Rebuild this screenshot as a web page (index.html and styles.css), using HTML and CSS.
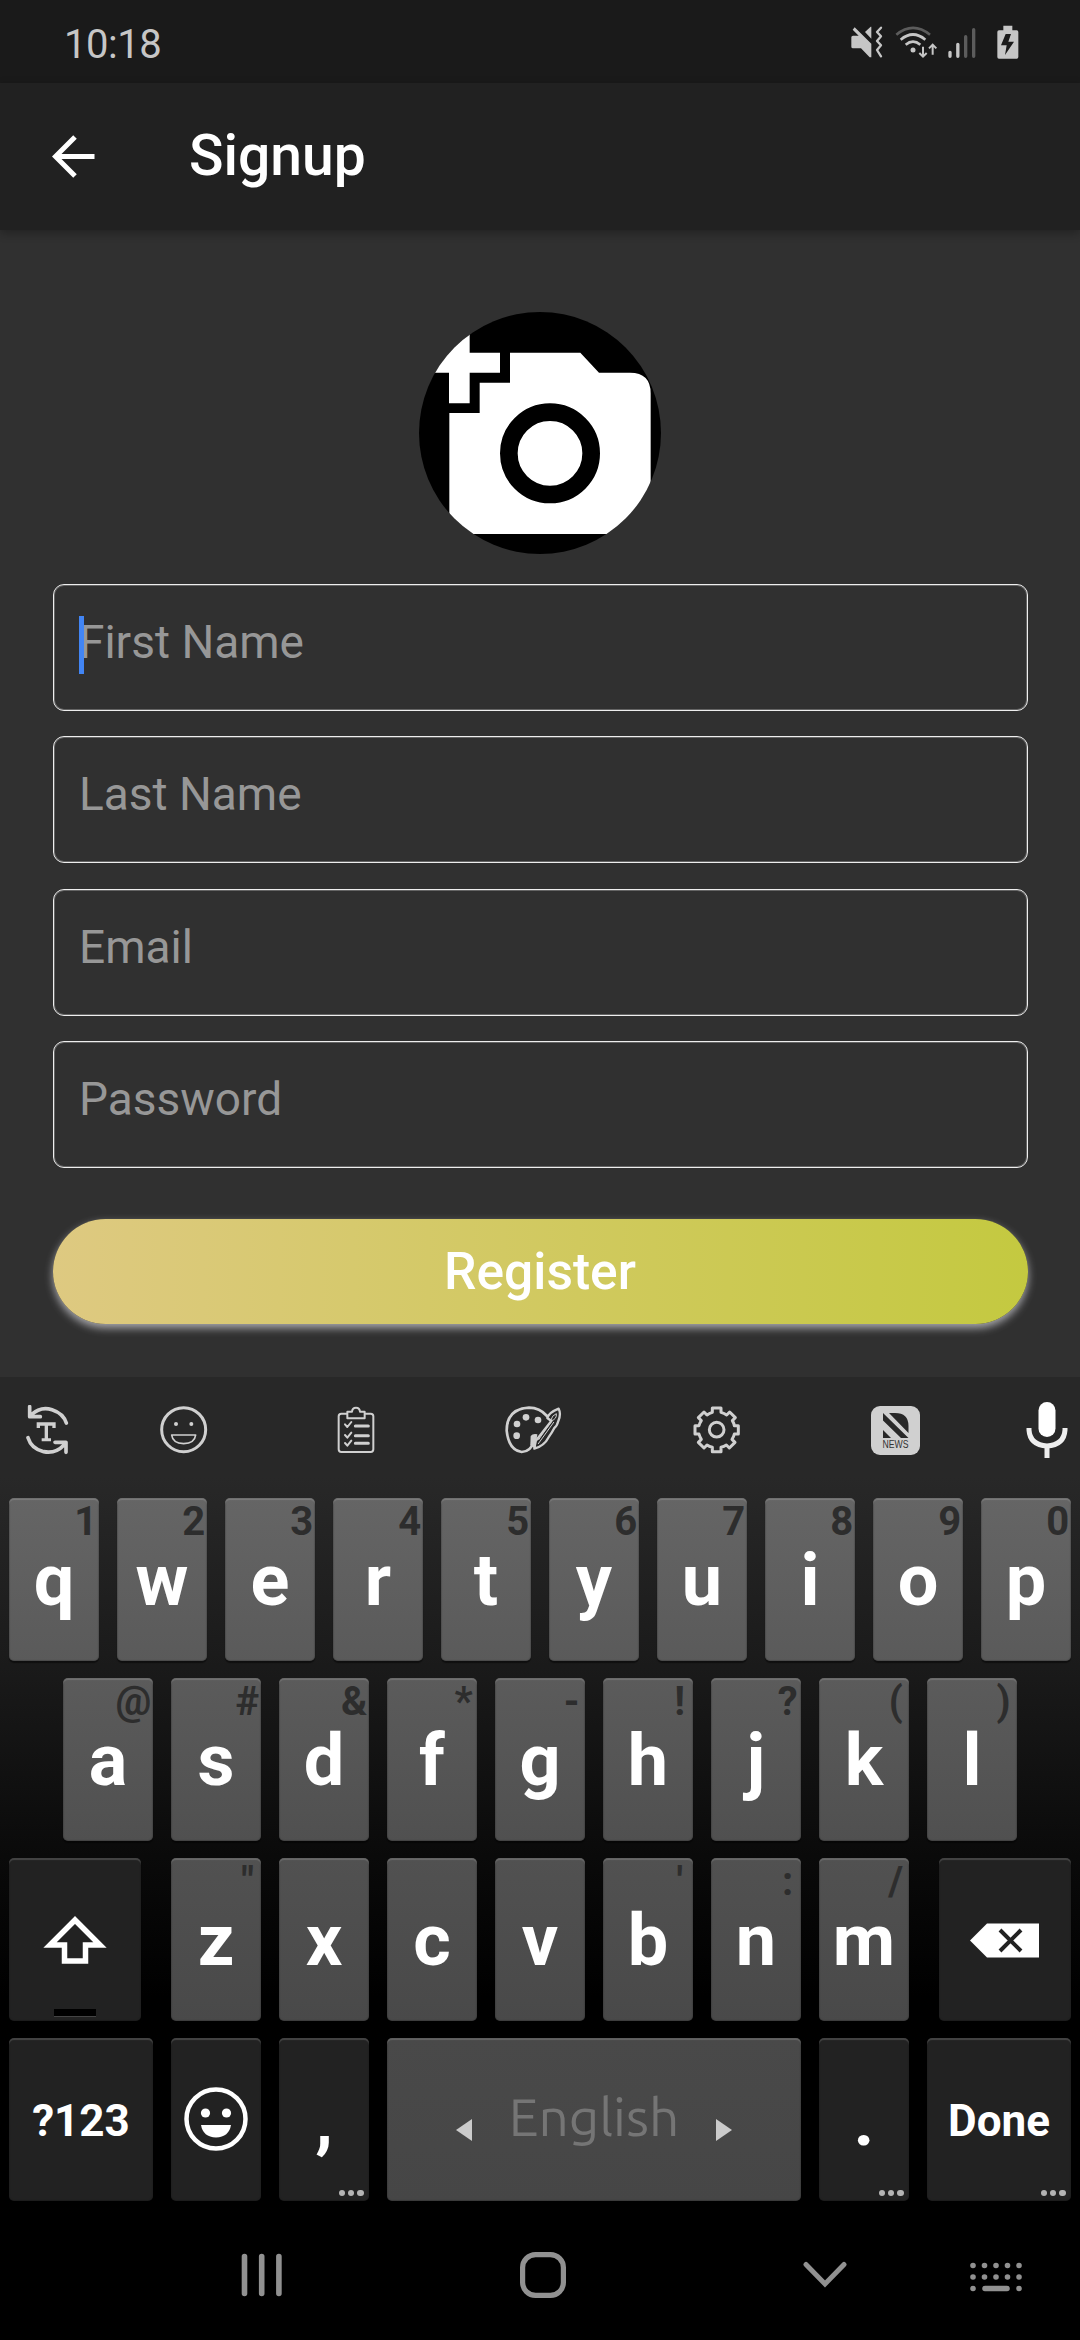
FILE: index.html
```html
<!DOCTYPE html>
<html lang="en">
<head>
<meta charset="utf-8">
<title>Signup</title>
<link rel="stylesheet" href="styles.css">
</head>
<body>
<div class="screen">
  <header class="status">
    <span class="clock">10:18</span>
    <div class="status-icons">
      <svg class="st-mute" width="33" height="36" viewBox="149 76 99 108"><path fill="#c6c6c6" d="M155 108h17l-18-18 6-7 50 49v41h-5l-26-27h-24q-5 0-5-5v-28q0-5 5-5zM191 97l17-16h2v36z"/><path fill="none" stroke="#c6c6c6" stroke-width="7" stroke-linejoin="round" stroke-linecap="round" d="M239 84l-12 13 12 13-12 14 12 13-12 14 12 19"/></svg>
      <svg class="st-wifi" width="43" height="36" viewBox="280 76 129 108"><g fill="none" stroke="#c6c6c6" stroke-width="8"><path stroke="#5c5c5c" d="M284 105q50-41 101 0"/><path d="M297 120q37-31 74 0M312 135q22-18 44 0"/></g><circle cx="334" cy="151" r="7.500" fill="#c6c6c6"/><path fill="none" stroke="#c6c6c6" stroke-width="6" d="M364 141v28M353 160l11 11 11-11M393 165v-28M382 146l11-11 11 11"/></svg>
      <svg class="st-signal" width="28" height="36" viewBox="440 76 84 108"><g stroke-width="10" stroke-linecap="round" stroke="#c6c6c6"><path d="M446 158v12M469.500 134v36"/><path stroke="#5c5c5c" d="M493 111v59M517 90v80"/></g></svg>
      <svg class="st-battery" width="22" height="36" viewBox="587 76 66 108"><path fill="#c6c6c6" d="M606 78h27v14h13q5 0 5 5v75q0 5-5 5h-53q-5 0-5-5V97q0-5 5-5h13z"/><path fill="#1a1a1a" d="M613 103h16l-8 23h17l-27 40 5-29h-17z"/></svg>
    </div>
  </header>
  <div class="appbar">
    <svg class="back" width="43" height="43" viewBox="0 0 43 43"><path fill="none" stroke="#fff" stroke-width="5" d="M42.500 21.500H4M23 2L3.500 21.500 23 41"/></svg>
    <h1 class="title">Signup</h1>
  </div>
  <main class="form">
    <svg class="avatar" width="242" height="242" viewBox="57 66 726 726">
      <defs><clipPath id="round"><circle cx="420" cy="429" r="363"/></clipPath></defs>
      <g clip-path="url(#round)"><path d="M57 66h726v726H57z"/><path fill="#fff" d="M57 188h90V66h62v122h91v60h-91v92h-62v-92H57zM330 188h211l56 60h93q62 0 62 62v422H148V369h91v-91h91z"/><circle cx="450" cy="490" r="123.500" fill="none" stroke="#000" stroke-width="53"/></g>
    </svg>
    <div class="fields">
      <div class="field"><span class="caret"></span>First Name</div>
      <div class="field">Last Name</div>
      <div class="field">Email</div>
      <div class="field">Password</div>
    </div>
    <div class="register">Register</div>
  </main>
  <section class="keyboard">
    <div class="toolbar">
      <svg class="tb-translate" width="43" height="50" viewBox="48 42 129 150"><g fill="none" stroke="#d0d0d0" stroke-width="11" stroke-linecap="round" stroke-linejoin="round"><path d="M59 47v30h32M64 71q28-26 62-15 34 11 43 40M168 184v-30h-33M162 162q-25 27-61 20-37-9-47-42"/></g><path fill="#d0d0d0" d="M80 94h57v17h-10v-7h-13v38h9v9H95v-9h9v-38H90v7H80z"/></svg>
      <svg class="tb-emoji" width="48" height="48" viewBox="450 50 144 144"><g fill="none" stroke="#d0d0d0"><circle cx="521" cy="121" r="66" stroke-width="9"/><path stroke-width="5" stroke-linejoin="round" d="M485 137h72q-3 25-36 26-33-1-36-26z"/></g><g fill="#d0d0d0"><circle cx="498" cy="104" r="6"/><circle cx="544" cy="104" r="6"/></g></svg>
      <svg class="tb-clip" width="38" height="48" viewBox="981 50 114 144"><g fill="none" stroke="#d0d0d0" stroke-linejoin="round" stroke-linecap="round"><path stroke-width="6" d="M1010 73h-16q-8 0-8 8v99q0 8 8 8h88q8 0 8-8V81q0-8-8-8h-15"/><path stroke-width="6" d="M1012 87V67h14q1-12 12-12t12 12h14v20z"/><path stroke-width="6" d="M1005 105l7 8 12-15M1005 137l7 8 12-15M1005 161l7 8 12-15"/><path stroke-width="9" d="M1036 110h39M1036 139h39M1036 162h39"/></g></svg>
      <svg class="tb-theme" width="57" height="48" viewBox="45 50 171 144"><g fill="none" stroke="#d0d0d0" stroke-width="8" stroke-linejoin="round" stroke-linecap="round"><path d="M171 80q-22-25-54-25-67 4-67 69 6 58 45 64 28-1 34-29"/><path stroke-width="7" d="M133 178l4-23 47-60-12-9q4-16 34-28 8 16-1 37-4 15-12 21-6 12-18 29-12 24-42 33z"/><path stroke-width="3" d="M146 151l39-56M145 163l46-64M183 91q3-13 16-18 2 16-14 21z"/></g><path fill="#d0d0d0" d="M122 140q6-8 20-5l-6 44-15-12z"/><g fill="#d0d0d0"><circle cx="80" cy="139" r="10"/><circle cx="81" cy="104" r="10"/><circle cx="108" cy="84" r="10"/><circle cx="144" cy="92" r="10"/></g></svg>
      <svg class="tb-gear" width="48" height="48" viewBox="609 50 144 144"><g fill="none" stroke="#d0d0d0" stroke-width="9" stroke-linejoin="round"><circle cx="680" cy="121" r="22"/><path d="M667 56h26v13q10 3 17 8l9-9 17 17-9 9q5 8 6 15h12v25h-12q-2 9-7 16l9 9-17 17-9-9q-7 5-16 7v13h-26v-13q-9-2-16-7l-9 9-17-17 9-9q-5-8-7-16h-12v-25h12q2-8 7-15l-9-9 17-17 9 9q7-5 16-8z"/></g></svg>
      <svg class="tb-news" width="49" height="49" viewBox="0 0 49 49"><rect width="49" height="49" rx="9" fill="#d0d0d0"/><path fill="#282828" d="M12 7l25.500 25H30L12 14.500zM18 7h6q13.500 0 13.500 13v7zM12 24l8 8h-8z"/><text class="news-label" x="11.500" y="41.500" textLength="26" lengthAdjust="spacingAndGlyphs">NEWS</text></svg>
      <svg class="tb-mic" width="42" height="58" viewBox="0 0 42 58"><rect x="12.500" y="1" width="17" height="35" rx="8.500" fill="#fff"/><path fill="none" stroke="#eee" stroke-width="5" d="M3 27v2q1 15 18 16 17-1 18-16v-2M21 44v13"/></svg>
    </div>
    <div class="rows">
      <div class="row r1">
        <div class="key">q<i>1</i></div><div class="key">w<i>2</i></div><div class="key">e<i>3</i></div><div class="key">r<i>4</i></div><div class="key">t<i>5</i></div><div class="key">y<i>6</i></div><div class="key">u<i>7</i></div><div class="key">i<i>8</i></div><div class="key">o<i>9</i></div><div class="key">p<i>0</i></div>
      </div>
      <div class="row r2">
        <div class="key">a<i>@</i></div><div class="key">s<i>#</i></div><div class="key">d<i>&amp;</i></div><div class="key">f<i>*</i></div><div class="key">g<i>-</i></div><div class="key">h<i>!</i></div><div class="key">j<i>?</i></div><div class="key">k<i>(</i></div><div class="key">l<i>)</i></div>
      </div>
      <div class="row r3">
        <div class="key dark side"><svg width="64" height="50" viewBox="0 0 64 50"><path fill="none" stroke="#fff" stroke-width="5.500" d="M32 4L7 29h14.500v16h21V29H57z"/></svg><span class="lock"></span></div>
        <div class="key">z<i>"</i></div><div class="key">x</div><div class="key">c</div><div class="key">v</div><div class="key">b<i>'</i></div><div class="key">n<i>:</i></div><div class="key">m<i>/</i></div>
        <div class="key dark side"><svg width="69" height="35" viewBox="0 0 69 35"><path fill="#fff" d="M0 17.500L17 .5h52v34H17z"/><path stroke="#222" stroke-width="4" d="M30 7l21 21M51 7L30 28"/></svg></div>
      </div>
      <div class="row r4">
        <div class="key dark wide word">?123</div>
        <div class="key dark emoji"><svg width="64" height="64" viewBox="0 0 64 64"><circle cx="32" cy="32" r="29.500" fill="none" stroke="#fff" stroke-width="4.500"/><g fill="#fff"><circle cx="21.500" cy="26" r="4.600"/><circle cx="42.500" cy="26" r="4.600"/><path d="M17 38h30q-2 12-15 12.500Q19 50 17 38z"/></g></svg></div>
        <div class="key dark">,<span class="more"><b></b><b></b><b></b></span></div>
        <div class="key space"><svg width="16" height="22" viewBox="0 0 16 22"><path fill="#cbcbcb" d="M16 0v22L0 11z"/></svg><span class="lang">English</span><svg width="16" height="22" viewBox="0 0 16 22"><path fill="#cbcbcb" d="M0 0v22l16-11z"/></svg></div>
        <div class="key dark">.<span class="more"><b></b><b></b><b></b></span></div>
        <div class="key dark wide word">Done<span class="more"><b></b><b></b><b></b></span></div>
      </div>
    </div>
  </section>
  <nav class="navbar">
    <svg class="nv-recent" width="42" height="46" viewBox="0 0 42 46"><path stroke="#919191" stroke-width="5.600" stroke-linecap="round" d="M3.500 4.500v37M20.700 4.500v37M37.900 4.500v37"/></svg>
    <svg class="nv-home" width="46" height="46" viewBox="0 0 46 46"><rect x="2.600" y="2.600" width="40.800" height="40.800" rx="13" fill="none" stroke="#919191" stroke-width="5.200"/></svg>
    <svg class="nv-down" width="44" height="27" viewBox="0 0 44 27"><path fill="none" stroke="#919191" stroke-width="5" stroke-linecap="round" d="M3 3.500l19 19.500 19-19.500"/></svg>
    <svg class="nv-ime" width="53" height="30" viewBox="0 0 53 30"><path fill="none" stroke="#919191" stroke-width="5.600" stroke-linecap="round" d="M3 3.500h.01M14.500 3.500h.01M26 3.500h.01M37.500 3.500h.01M49 3.500h.01M3 15h.01M14.500 15h.01M26 15h.01M37.500 15h.01M49 15h.01M3 26.500h.01M15 26.500h22M49 26.500h.01"/></svg>
  </nav>
</div>
</body>
</html>
```

FILE: styles.css
```css
* { box-sizing: border-box; }
body { margin: 0; background: #303030; font-family: Roboto, sans-serif; color: #fff; }
svg { display: block; flex: none; }
.screen { display: flex; flex-direction: column; width: 1080px; height: 2340px; overflow: hidden; }

.status { display: flex; justify-content: space-between; height: 83px; padding: 0 61px 0 64px; background: #1a1a1a; flex: none; }
.clock { font-size: 40px; line-height: 90px; color: #c6c6c6; letter-spacing: -.5px; }
.status-icons { display: flex; padding-top: 25px; }
.st-wifi { margin-left: 11px; }
.st-signal { margin-left: 10px; }
.st-battery { margin-left: 21px; }

.appbar { display: flex; align-items: center; height: 147px; padding-left: 52px; background: #212121; flex: none; box-shadow: 0 3px 9px rgba(0, 0, 0, .3); }
.title { margin: 0 0 2px 94px; font-size: 57px; font-weight: 500; line-height: 66px; }

.form { display: flex; flex-direction: column; height: 1147px; padding: 82px 52.500px 0; flex: none; }
.avatar { align-self: center; }
.fields { display: flex; flex-direction: column; gap: 25.300px; margin-top: 30px; }
.field { position: relative; height: 127px; padding: 30px 0 0 25.500px; border: 1.500px solid #eee; border-radius: 11px; box-shadow: inset 0 0 0 1px rgba(255, 255, 255, .25); font-size: 46px; line-height: 54px; color: #979797; }
.caret { position: absolute; left: 25px; top: 31px; width: 5.500px; height: 58px; background: #4285f4; }
.register { height: 105px; margin-top: 51px; border-radius: 53px; background: linear-gradient(90deg, #dec981, #c4c940); box-shadow: 0 4px 8px rgba(190, 190, 195, .85); font-size: 51.500px; font-weight: 500; line-height: 105px; text-align: center; }

.keyboard { height: 835px; flex: none; background: linear-gradient(#282828 0, #282828 100px, #1a1a1a 290px, #0a0a0a 480px, #000 620px); }
.toolbar { display: flex; align-items: center; height: 106px; padding-left: 26px; }
.tb-emoji { margin-left: 91px; }
.tb-clip { margin-left: 129px; }
.tb-theme { margin-left: 130px; }
.tb-gear { margin-left: 131px; }
.tb-news { margin-left: 130px; }
.tb-mic { margin-left: 106px; }
.news-label { font-family: "Liberation Sans", sans-serif; font-size: 10px; fill: #333; }

.rows { display: flex; flex-direction: column; gap: 17px; padding-top: 15px; }
.row { display: flex; justify-content: center; gap: 18.600px; height: 163px; }
.key { position: relative; display: flex; align-items: center; justify-content: center; width: 89.400px; height: 163px; padding-top: 2px; border-radius: 5px; background: linear-gradient(var(--top), var(--bottom)); box-shadow: inset 0 2px 1px rgba(255, 255, 255, .17), inset 0 0 1px 1px rgba(0, 0, 0, .18), 0 2px 1px rgba(0, 0, 0, .45); font-size: 72px; font-weight: 700; line-height: 84px; }
.key i { position: absolute; top: 0; right: 1.500px; min-width: 23px; text-align: center; font-style: normal; font-size: 40px; line-height: 47px; color: #2d2d2d; }
.r1 { --top: #656565; --bottom: #5a5a5a; }
.r2 { --top: #5b5b5b; --bottom: #505050; }
.r3 { --top: #515151; --bottom: #494949; }
.r4 { --top: #494949; --bottom: #464646; }
.dark { --top: #222; --bottom: #222; }
.r3 .side { width: 132px; }
.r3 .side:first-child { margin-right: 11.400px; }
.r3 .side:last-child { margin-left: 11.400px; }
.wide { width: 143.400px; }
.word { font-size: 44px; line-height: 52px; }
.emoji { padding: 0 0 2px; }
.space { width: 413.400px; gap: 37px; padding: 0 0 6px; }
.space svg { margin-top: 26px; }
.lang { font-family: Ubuntu, "Noto Sans", sans-serif; font-weight: 400; font-size: 53px; line-height: 60px; color: #757575; }
.lock { position: absolute; left: 45px; bottom: 5px; width: 42px; height: 7px; background: #000; box-shadow: 0 1px 0 #444; }
.more { position: absolute; right: 5px; bottom: 5px; display: flex; gap: 3px; }
.more b { width: 6.300px; height: 6.300px; border-radius: 50%; background: #b4b4b4; }

.navbar { display: flex; align-items: center; height: 128px; padding: 0 0 3px 241px; background: #000; flex: none; }
.nv-home { margin-left: 237px; }
.nv-down { margin-left: 237px; }
.nv-ime { margin-left: 123px; margin-top: 5px; }
```
